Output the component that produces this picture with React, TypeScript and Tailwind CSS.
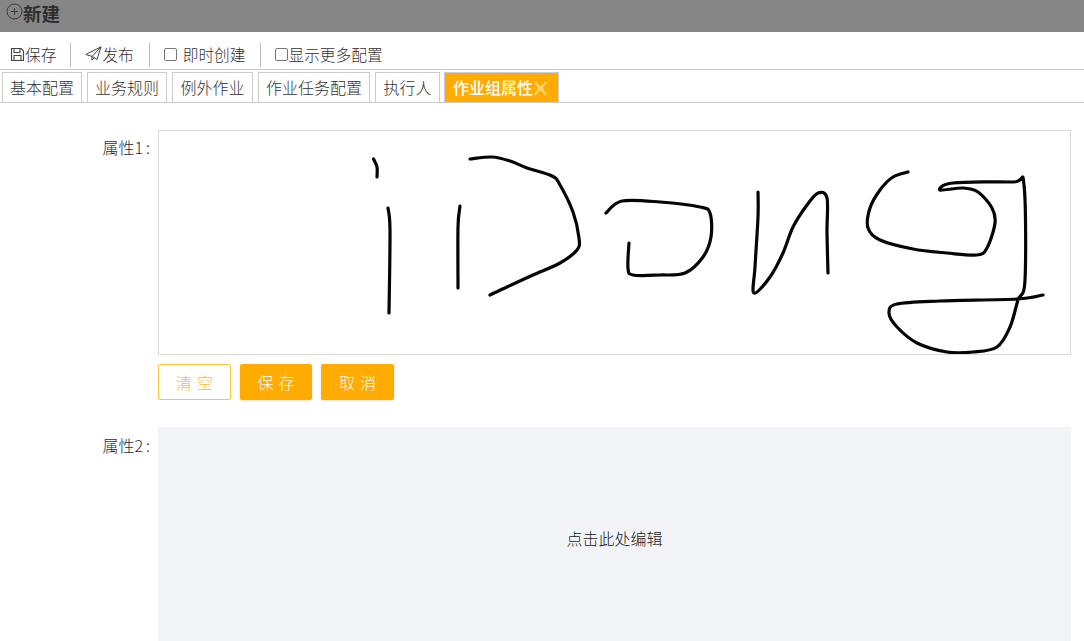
import React from "react";

type P = [number, number];

function smooth(pts: P[]): string {
  let d = `M${pts[0][0]} ${pts[0][1]}`;
  for (let i = 0; i < pts.length - 1; i++) {
    const a = pts[Math.max(0, i - 1)];
    const b = pts[i];
    const c = pts[i + 1];
    const e = pts[Math.min(pts.length - 1, i + 2)];
    const c1x = b[0] + (c[0] - a[0]) / 6;
    const c1y = b[1] + (c[1] - a[1]) / 6;
    const c2x = c[0] - (e[0] - b[0]) / 6;
    const c2y = c[1] - (e[1] - b[1]) / 6;
    d += ` C${c1x.toFixed(1)} ${c1y.toFixed(1)} ${c2x.toFixed(1)} ${c2y.toFixed(1)} ${c[0]} ${c[1]}`;
  }
  return d;
}

const strokes: P[][] = [
  [[373.5, 159], [377, 167], [377, 177]],
  [[388, 208], [390, 230], [389, 313]],
  [[460, 206], [458, 227], [458, 288]],
  [[470, 159], [492, 157], [510, 161], [527, 168], [552, 176], [560, 185], [573, 212], [579, 238], [577, 250], [560, 263], [533, 275], [507, 287], [490, 295]],
  [[606, 213], [622, 201], [660, 202], [700, 207], [710, 213], [711, 237], [703, 257], [685, 273], [660, 275], [633, 275], [628, 268], [629, 243]],
  [[758, 192], [758, 217], [755, 267], [754, 293], [770, 277], [783, 253], [793, 227], [807, 205], [818, 193], [827, 198], [827, 233], [828, 273]],
  [[908, 172], [893, 177], [880, 190], [870, 208], [868, 228], [880, 240], [913, 249], [947, 253], [977, 255], [987, 248], [995, 223], [992, 208], [978, 192], [963, 188], [940, 190], [953, 183], [1013, 182], [1024, 185], [1025, 280], [1018, 300], [1010, 327], [997, 347], [973, 352], [947, 352], [917, 343], [897, 327], [889, 313], [897, 304], [940, 301], [1017, 299], [1043, 295]],
];

function Tab({ label, w }: { label: string; w: string }) {
  return (
    <div className={`${w} h-[30px] pb-[2px] border border-b-0 border-[#cccccc] flex items-center justify-center text-[16px] font-light text-[#333333]`}>
      {label}
    </div>
  );
}

function Sep() {
  return <div className="w-px h-[24px] bg-[#bbbbbb]" />;
}

function Btn({ a, b, cls }: { a: string; b: string; cls: string }) {
  return (
    <div className={`h-[36px] rounded-[2px] flex items-center justify-center gap-[5px] text-[16px] font-light ${cls}`}>
      <span>{a}</span>
      <span>{b}</span>
    </div>
  );
}

function Label({ n, pt }: { n: string; pt: string }) {
  return (
    <div className={`w-[150px] flex justify-end text-[16px] font-light leading-[20px] ${pt} text-[#1f2d3d]`}>
      <span>属性{n}</span>
      <span className="ml-[3px]">:</span>
    </div>
  );
}

export default function App() {
  return (
    <div
      className="w-[1084px] h-[641px] overflow-hidden bg-white text-[#333333]"
      style={{ fontFamily: '"Noto Sans CJK SC", "Liberation Sans", sans-serif' }}
    >
      <div className="h-[32px] bg-[#868686] flex items-start pl-[6px] pt-[1px] text-[#2e2e2e]">
        <svg width="17" height="17" viewBox="0 0 17 17" fill="none" stroke="#3a3a3a" strokeWidth="1" className="mt-[2px]">
          <circle cx="8.5" cy="8.5" r="7.5" />
          <path d="M5 8.5h7M8.5 5v7" />
        </svg>
        <span className="text-[18.5px] leading-[24px] font-bold">新建</span>
      </div>

      <div className="h-[38px] border-b border-[#cccccc] flex items-center pl-[10px] pt-[8px] text-[15.7px] font-light text-[#333333]">
        <svg width="15" height="15" viewBox="0 0 15 15" fill="none" stroke="#444444" strokeWidth="1.1">
          <path d="M1.5 1.5h9.5l2.5 2.5v9.5h-12z" />
          <path d="M4 1.5v4h6v-4M4 13.5v-5h7v5" />
        </svg>
        <span>保存</span>
        <div className="ml-[14px] mr-[14px]"><Sep /></div>
        <svg width="17" height="15" viewBox="0 0 17 15" fill="none" stroke="#444444" strokeWidth="1" strokeLinejoin="round" className="-mt-[2px]">
          <path d="M0.8 8.5L16 0.8L12 13.5L7.5 10.5z" />
          <path d="M16 0.8L7 10.5L6.8 14L9.5 11.8" />
        </svg>
        <span>发布</span>
        <div className="ml-[15px] mr-[14px]"><Sep /></div>
        <span className="w-[13px] h-[13px] border border-[#767676] rounded-[2px]" />
        <span className="ml-[6px]">即时创建</span>
        <div className="ml-[14px] mr-[14px]"><Sep /></div>
        <span className="w-[13px] h-[13px] border border-[#767676] rounded-[2px]" />
        <span className="ml-px">显示更多配置</span>
      </div>

      <div className="h-[33px] border-b border-[#cccccc] flex items-end pl-[2px] gap-[5px]">
        <Tab label="基本配置" w="w-[80px]" />
        <Tab label="业务规则" w="w-[80px]" />
        <Tab label="例外作业" w="w-[81px]" />
        <Tab label="作业任务配置" w="w-[112px]" />
        <Tab label="执行人" w="w-[65px]" />
        <div className="-ml-px w-[115px] h-[30px] pb-[2px] border border-b-0 border-[#cccccc] bg-[#ffab00] flex items-center pl-[8px] text-[16px] font-medium text-white">
          <span>作业组属性</span>
          <svg width="15" height="15" viewBox="0 0 15 15" fill="none" stroke="#ffd778" strokeWidth="2.4" strokeLinecap="round" className="mt-[3px]">
            <path d="M2.5 2L12.5 13M12.5 2L2.5 13" />
            <path d="M5 7.5h5" strokeWidth="1.5" />
          </svg>
        </div>
      </div>

      <div className="flex pt-[27px] items-start">
        <Label n="1" pt="pt-[7px]" />
        <div className="ml-[8px] w-[913px]">
          <div className="h-[225px] border border-[#d9d9d9] bg-white">
            <svg width="911" height="223" viewBox="159 131 911 223" fill="none" stroke="#050505" strokeWidth="3.2" strokeLinecap="round" strokeLinejoin="round">
              {strokes.map((s, i) => (
                <path key={i} d={smooth(s)} />
              ))}
            </svg>
          </div>
          <div className="mt-[9px] flex gap-[9px]">
            <Btn a="清" b="空" cls="w-[73px] border border-[#ffc23d] text-[#ffb81f]" />
            <Btn a="保" b="存" cls="w-[72px] bg-[#ffab00] shadow-sm text-white" />
            <Btn a="取" b="消" cls="w-[73px] bg-[#ffab00] shadow-sm text-white" />
          </div>
        </div>
      </div>

      <div className="flex mt-[27px] items-start">
        <Label n="2" pt="pt-[8px]" />
        <div className="ml-[8px] w-[913px] h-[224px] pb-[2px] bg-[#f3f4f8] flex items-center justify-center text-[16px] font-light text-[#1a1a1a]">
          点击此处编辑
        </div>
      </div>
    </div>
  );
}
